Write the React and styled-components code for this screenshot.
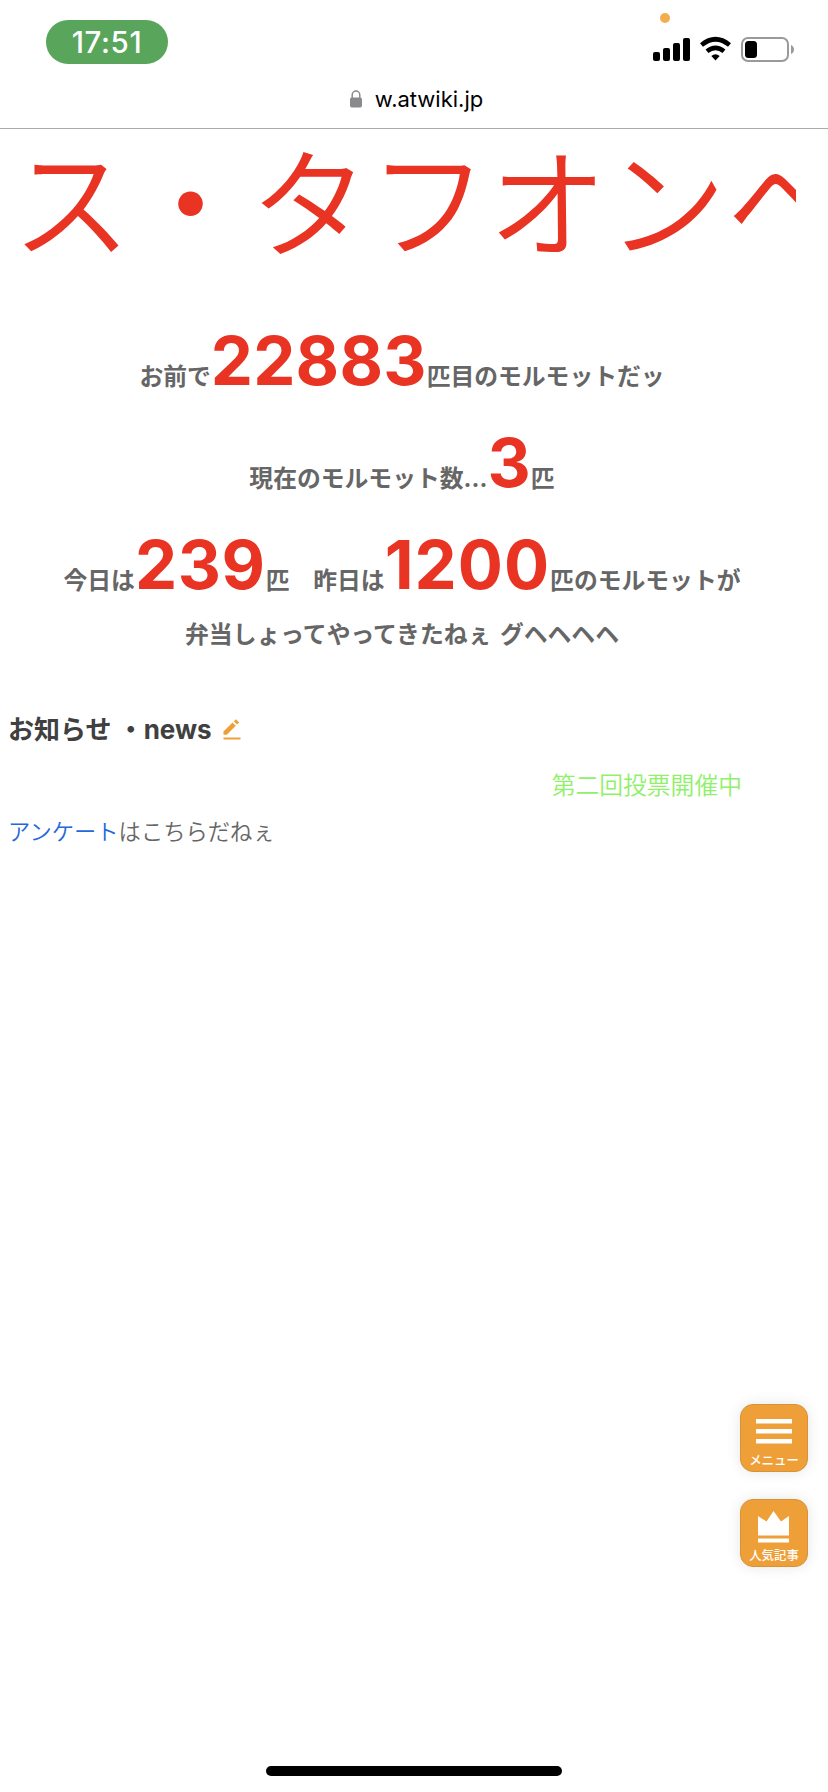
import styled, { createGlobalStyle } from 'styled-components'

const GlobalStyle = createGlobalStyle`
    * {
        box-sizing: border-box;
    }
    body {
        margin: 0;
        background: #ffffff;
        font-family: 'Inter', 'Noto Sans CJK JP', sans-serif;
    }
`

const Page = styled.div`
    position: relative;
    display: flex;
    flex-direction: column;
    width: 828px;
    height: 1792px;
    overflow: hidden;
    background: #ffffff;
`

const StatusBar = styled.header`
    display: flex;
    justify-content: space-between;
    height: 74px;
    padding: 12px 33px 0 46px;
`

const Clock = styled.div`
    width: 122px;
    height: 44px;
    margin-top: 8px;
    border-radius: 22px;
    background: #58a55b;
    color: #ffffff;
    font-size: 29.5px;
    font-weight: 450;
    line-height: 45px;
    text-align: center;
    letter-spacing: 0.6px;
`

const StatusRight = styled.div`
    display: flex;
    flex-direction: column;
    gap: 14px;
    width: 142px;
    padding-top: 1px;
`

const RecordingDot = styled.span`
    width: 10px;
    height: 10px;
    margin-left: 7px;
    border-radius: 50%;
    background: #f1ad4e;
`

const StatusIcons = styled.svg`
    display: block;
    width: 144px;
    height: 26px;
    overflow: visible;
`

const AddressBar = styled.div`
    display: flex;
    justify-content: center;
    align-items: center;
    gap: 13px;
    height: 55px;
    padding-bottom: 4px;
    padding-left: 5px;
    border-bottom: 1px solid #ababab;
    color: #000000;
    font-size: 22px;
    line-height: 30px;
`

const LockIcon = styled.svg`
    width: 12px;
    height: 18px;
`

const Main = styled.main`
    display: flex;
    flex-direction: column;
    width: 788px;
    margin-left: 8px;
`

const Marquee = styled.div`
    height: 181px;
    padding: 3px 0 0 4px;
    overflow: hidden;
    color: #e93323;
    font-size: 119px;
    font-weight: 350;
    line-height: 148px;
    white-space: nowrap;
`

const CounterLine = styled.p`
    display: flex;
    justify-content: center;
    align-items: baseline;
    height: ${({ $height }) => $height || 102}px;
    margin: 0;
    color: #666666;
    font-size: 23.8px;
    font-weight: 700;
    line-height: ${({ $lineHeight }) => $lineHeight || 102}px;
    white-space: pre;
    word-spacing: 3px;
`

const Count = styled.span`
    color: #e93323;
    font-size: 67px;
    letter-spacing: ${({ $spacing }) => $spacing || 0.2}px;
`

const NewsTitle = styled.h2`
    display: flex;
    align-items: center;
    height: 40px;
    margin: 40px 0 0;
    color: #404040;
    font-size: 26px;
    font-weight: 700;
    line-height: 40px;
    white-space: pre;
`

const EditIcon = styled.svg`
    width: 18px;
    height: 22px;
    margin-left: 11px;
`

const VoteNotice = styled.p`
    height: 40px;
    margin: 16px 0 0;
    padding-right: 54px;
    color: #8ff06a;
    font-size: 23.8px;
    font-weight: 350;
    line-height: 40px;
    text-align: right;
`

const Survey = styled.p`
    margin: 6px 0 0;
    color: #666666;
    font-size: 22.3px;
    font-weight: 350;
    line-height: 40px;
`

const SurveyLink = styled.a`
    color: #2668dc;
    text-decoration: none;
`

const FloatingNav = styled.nav`
    position: absolute;
    top: 1404px;
    right: 20px;
    display: flex;
    flex-direction: column;
    gap: 27px;
`

const NavButton = styled.button`
    display: flex;
    flex-direction: column;
    align-items: center;
    justify-content: space-between;
    width: 68px;
    height: 68px;
    padding: 12px 0 1px;
    border: 1.5px solid #d6933a;
    border-radius: 13px;
    background: #ef9f38;
    box-shadow: 0 0 14px rgba(0, 0, 0, 0.1);
    color: #ffffff;
    font-family: inherit;
    font-size: 12.4px;
    font-weight: 500;
    line-height: 18px;
    white-space: nowrap;
`

const NavIcon = styled.svg`
    display: block;
    width: 36px;
    height: 32px;
    overflow: visible;
`

const HomeIndicator = styled.div`
    width: 296px;
    height: 10px;
    margin: auto auto 16px;
    border-radius: 5px;
    background: #000000;
`

function PhoneStatus() {
    return (
        <StatusIcons viewBox="0 0 144 26">
            <rect x="0" y="15" width="7" height="9" rx="2" />
            <rect x="10" y="11" width="7" height="13" rx="2" />
            <rect x="20" y="6" width="7" height="18" rx="2" />
            <rect x="30" y="1" width="7" height="23" rx="2" />
            <path d="M48.5 8 Q62.5 -3.5 76.5 8" fill="none" stroke="#000" strokeWidth="4.6" />
            <path d="M54 14.3 Q62.5 7.5 71 14.3" fill="none" stroke="#000" strokeWidth="4.6" />
            <path d="M58.3 19 Q62.5 15.5 66.7 19 L62.5 23.6 Z" />
            <rect x="89" y="1" width="46" height="23" rx="6" fill="none" stroke="#9a9a9a" strokeWidth="2" />
            <rect x="92" y="4" width="12" height="17" rx="3.5" />
            <path d="M138 8 Q141 9.5 141 12.5 Q141 15.5 138 17 Z" fill="#9a9a9a" />
        </StatusIcons>
    )
}

function App() {
    return (
        <Page>
            <GlobalStyle />
            <StatusBar>
                <Clock>17:51</Clock>
                <StatusRight>
                    <RecordingDot />
                    <PhoneStatus />
                </StatusRight>
            </StatusBar>
            <AddressBar>
                <LockIcon viewBox="0 0 12 18">
                    <path d="M2.2 9 V5 a3.8 4 0 0 1 7.6 0 V9" fill="none" stroke="#8a8a8d" strokeWidth="1.5" />
                    <rect y="7.5" width="12" height="10" rx="1.8" fill="#8a8a8d" />
                </LockIcon>
                w.atwiki.jp
            </AddressBar>
            <Main>
                <Marquee>ス・タフオンヘ</Marquee>
                <CounterLine>お前で<Count>22883</Count>匹目のモルモットだッ</CounterLine>
                <CounterLine>現在のモルモット数...<Count>3</Count>匹</CounterLine>
                <CounterLine>今日は<Count $spacing={0.6}>239</Count>匹　昨日は<Count $spacing={1}>1200</Count>匹のモルモットが</CounterLine>
                <CounterLine $height={54} $lineHeight={38}>弁当しょってやってきたねぇ グヘヘヘヘ</CounterLine>
                <NewsTitle>
                    お知らせ ・news
                    <EditIcon viewBox="0 0 18 22" fill="#ef9f38">
                        <path d="M0.5 12.5 L9.5 3.5 L12.8 6.8 L3.8 15.8 H0.5 Z" />
                        <path d="M10.8 2.3 L13 0.2 L16.2 3.4 L14 5.6 Z" />
                        <rect x="0.5" y="18.5" width="17" height="2" />
                    </EditIcon>
                </NewsTitle>
                <VoteNotice>第二回投票開催中</VoteNotice>
                <Survey><SurveyLink>アンケート</SurveyLink>はこちらだねぇ</Survey>
            </Main>
            <FloatingNav>
                <NavButton>
                    <NavIcon viewBox="0 0 36 32" fill="#fff">
                        <rect y="2" width="36" height="4.5" />
                        <rect y="12" width="36" height="4.5" />
                        <rect y="22" width="36" height="4.5" />
                    </NavIcon>
                    メニュー
                </NavButton>
                <NavButton>
                    <NavIcon viewBox="0 0 36 32" fill="#fff">
                        <path d="M2 4 L10.5 9.5 L17.5 -1 L25 9.5 L33 4 V23.5 H2 Z" />
                        <rect x="2" y="26.5" width="31" height="4" />
                    </NavIcon>
                    人気記事
                </NavButton>
            </FloatingNav>
            <HomeIndicator />
        </Page>
    )
}

export default App
